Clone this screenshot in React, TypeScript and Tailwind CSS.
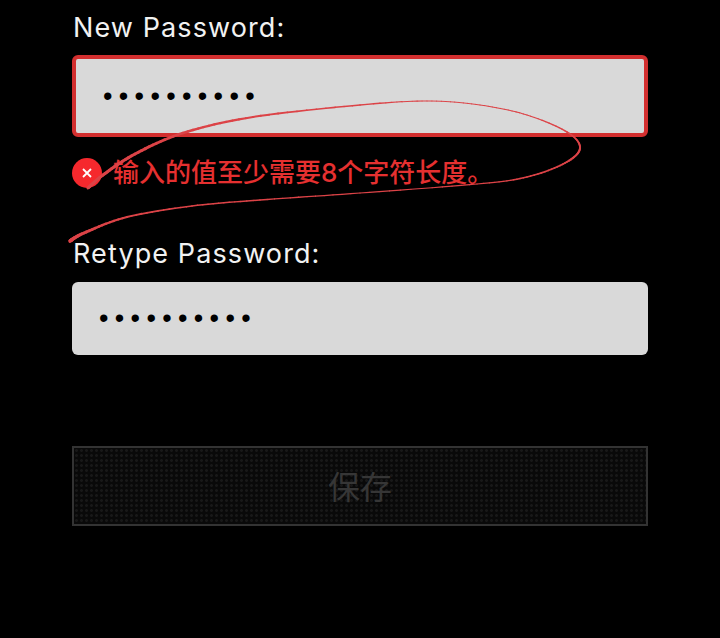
const KEY: [number, number, number][] = [
  [70, 241, 3.6], [84, 233, 3], [127, 217, 2], [192, 206, 1.6], [260, 200, 1.4], [360, 193, 1.2],
  [477, 184, 1.2], [527, 177, 1.5], [565, 163, 1.9], [580, 148, 2], [567, 132, 1.5],
  [527, 115, 1.1], [480, 105, 1], [427, 101, 1], [360, 105, 1.4], [253, 117, 2],
  [183, 133, 2.5], [135, 154, 3], [103, 175, 3], [88, 188, 3],
];

function sample() {
  const out: [number, number, number][] = [];
  for (let i = 0; i < KEY.length - 1; i++) {
    const p0 = KEY[Math.max(i - 1, 0)];
    const p1 = KEY[i];
    const p2 = KEY[i + 1];
    const p3 = KEY[Math.min(i + 2, KEY.length - 1)];
    for (let s = 0; s < 12; s++) {
      const t = s / 12;
      const f = (k: number) =>
        0.5 *
        (2 * p1[k] +
          (p2[k] - p0[k]) * t +
          (2 * p0[k] - 5 * p1[k] + 4 * p2[k] - p3[k]) * t * t +
          (3 * p1[k] - p0[k] - 3 * p2[k] + p3[k]) * t * t * t);
      out.push([f(0), f(1), f(2)]);
    }
  }
  out.push(KEY[KEY.length - 1]);
  return out;
}

const PTS = sample();

export default function App() {
  return (
    <div className="relative h-[638px] w-[720px] overflow-hidden bg-black font-['Inter','Noto_Sans_CJK_SC',sans-serif]">
      <div className="ml-[72px] flex w-[576px] flex-col">
        <label className="mt-[11px] h-[34px] pl-px text-[27px] leading-[34px] tracking-[1.1px] text-[#f2f2f2]">New Password:</label>
        <div className="mt-[10px] flex h-[82px] items-center rounded-[6px] border-[4px] border-[#d32f2f] bg-[#d9d9d9] pl-[27px]">
          <input
            type="password"
            readOnly
            defaultValue="1234567890"
            className="w-[400px] bg-transparent font-['Liberation_Sans'] text-[27px] tracking-[6.35px] text-black outline-none"
          />
        </div>
        <div className="mt-[21px] flex h-[30px] items-center gap-[11px]">
          <div className="flex h-[30px] w-[30px] items-center justify-center rounded-full bg-[#f5282d]">
            <svg width="10" height="10" viewBox="0 0 10 10" fill="none" stroke="#fff" strokeWidth="1.8">
              <path d="M1 1 L9 9 M9 1 L1 9" />
            </svg>
          </div>
          <span className="text-[26px] font-medium leading-[30px] text-[#e53030]">输入的值至少需要8个字符长度。</span>
        </div>
        <label className="mt-[49px] h-[34px] pl-px text-[27px] leading-[34px] tracking-[1.1px] text-[#f2f2f2]">Retype Password:</label>
        <div className="mt-[11px] flex h-[73px] items-center rounded-[6px] bg-[#d9d9d9] pl-[27px]">
          <input
            type="password"
            readOnly
            defaultValue="1234567890"
            className="w-[400px] bg-transparent font-['Liberation_Sans'] text-[27px] tracking-[6.35px] text-black outline-none"
          />
        </div>
        <button className="mt-[91px] flex h-[80px] items-center justify-center border-2 border-[#333333] bg-[#0c0c0c] bg-[radial-gradient(circle,#181818_1.2px,#090909_1.6px)] bg-[length:5px_5px] pt-[3px] text-[32px] text-[#363636]">
          保存
        </button>
      </div>
      <svg className="pointer-events-none absolute left-0 top-0" width="720" height="638" fill="none" stroke="#dc4347" strokeLinecap="round">
        {PTS.slice(1).map((p, i) => (
          <line key={i} x1={PTS[i][0]} y1={PTS[i][1]} x2={p[0]} y2={p[1]} strokeWidth={p[2]} />
        ))}
      </svg>
    </div>
  );
}
